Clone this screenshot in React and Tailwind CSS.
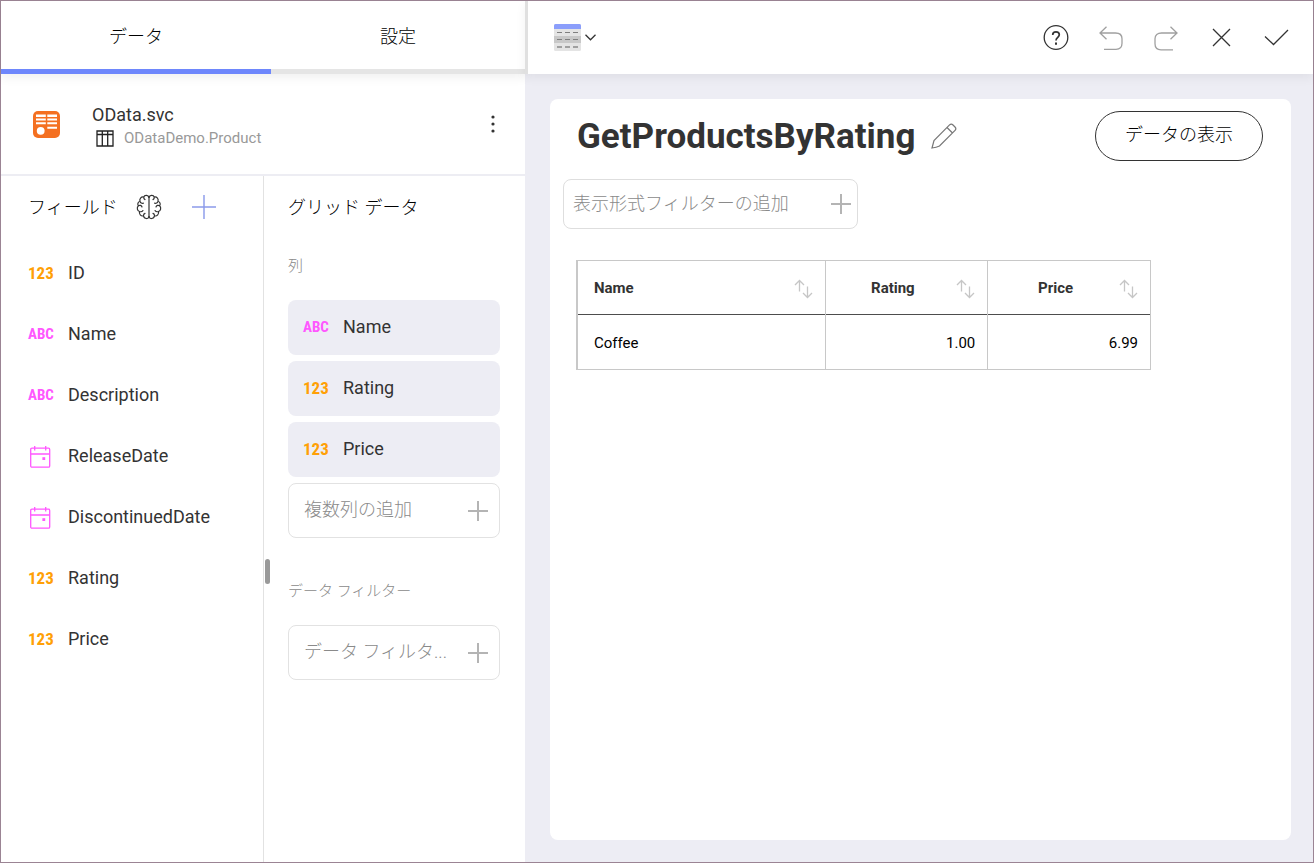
import React from "react";

const fields = [
  { type: "number", name: "ID" },
  { type: "text", name: "Name" },
  { type: "text", name: "Description" },
  { type: "date", name: "ReleaseDate" },
  { type: "date", name: "DiscontinuedDate" },
  { type: "number", name: "Rating" },
  { type: "number", name: "Price" },
];

const columns = [
  { type: "text", name: "Name" },
  { type: "number", name: "Rating" },
  { type: "number", name: "Price" },
];

function CalendarIcon() {
  return (
    <svg className="mt-1 ml-[2px]" width="22" height="23" viewBox="0 0 22 23" fill="none" stroke="#ff57ff" strokeWidth="1.3" aria-hidden="true">
      <rect x="0.7" y="2.2" width="19" height="19" rx="1.2" />
      <path d="M0.7 8h19M4.7 0v4.6M15.7 0v4.6" />
      <rect x="12.4" y="11.2" width="2.8" height="2.8" fill="#ff57ff" stroke="none" />
    </svg>
  );
}

function TypeIcon({ type }) {
  return (
    <span className="flex w-[40px] shrink-0 items-center font-['Roboto_Condensed','Liberation_Sans_Narrow',Roboto,sans-serif] leading-5 font-bold">
      {type === "number" && <span className="text-[17px] text-[#ffa006]">123</span>}
      {type === "text" && <span className="text-[15px] text-[#ff57ff]">ABC</span>}
      {type === "date" && <CalendarIcon />}
    </span>
  );
}

function PlusIcon({ size = 20, color = "#b4b4b4", width = 2 }) {
  return (
    <svg className="shrink-0" width={size} height={size} viewBox="0 0 20 20" fill="none" stroke={color} strokeWidth={width} aria-hidden="true">
      <path d="M10 0v20M0 10h20" />
    </svg>
  );
}

function AddBox({ label }) {
  return (
    <button type="button" className="flex h-[55px] w-full items-center justify-between rounded-lg border border-[#e2e2e2] pr-[11px] pl-[15px] text-left font-light text-[#8a8a8a]">
      <span className="pb-[2px] whitespace-nowrap">{label}</span>
      <PlusIcon />
    </button>
  );
}

function SortIcon() {
  return (
    <svg className="shrink-0" width="19" height="20" viewBox="0 0 19 20" fill="none" stroke="#c6c6c6" strokeWidth="1.3" aria-hidden="true">
      <path d="M5.5 12.5V1.5M1 6l4.500-4.500L10 6M13.500 7.500V18.500M9 14l4.500 4.500L18 14" />
    </svg>
  );
}

function SourceIcon() {
  return (
    <svg width="27" height="27" viewBox="0 0 27 27" aria-hidden="true">
      <rect width="27" height="27" rx="5" fill="#f47021" />
      <g fill="#fff">
        <path d="M3 3.600h9.800v2.300H3zM3 7.600h9.800v2H3zM3 11.300h9.800v2H3zM14.300 3.600H24v2.300h-9.700zM14.300 7.600H24v2h-9.700zM14.300 11.300H24v2h-9.700zM14.300 15.800H24v2h-9.700z" />
        <circle cx="7.700" cy="19.800" r="3.900" />
      </g>
    </svg>
  );
}

function BrainIcon() {
  return (
    <svg width="26" height="26" viewBox="0 0 26 26" fill="none" stroke="#333" strokeWidth="1.200" strokeLinecap="round" strokeLinejoin="round" aria-hidden="true">
      <path d="M13 3.500V22.500" />
      <path d="M13 3.500C12.500 0.800 8.500 0.600 7.800 3C5 2.500 3.200 4.800 4 7.300C1.700 8 1.300 10.300 2.400 11.800C0.500 13.600 1.200 16.800 3.500 17.500C2.800 20.200 4.900 22.400 7.500 21.900C8.200 25.400 12.500 25.200 13 22.500M4 7.300C4.400 8.800 5.900 9.600 7.400 9.200M2.400 11.800C3.700 10.900 5.600 11.300 6 13M7.800 3C7.600 4.300 8.200 5.200 9 5.600M3.500 17.500C5 18 6.200 17.600 6.900 16.600M7.500 21.900C7.400 20.500 8 19.700 9 19.400" />
      <path d="M13 3.500C13.500 0.800 17.500 0.600 18.200 3C21 2.500 22.800 4.800 22 7.300C24.300 8 24.700 10.300 23.600 11.800C25.500 13.600 24.800 16.800 22.500 17.500C23.200 20.200 21.100 22.400 18.500 21.900C17.800 25.400 13.500 25.200 13 22.500M22 7.300C21.600 8.800 20.100 9.600 18.600 9.200M23.600 11.800C22.300 10.900 20.400 11.300 20 13M18.200 3C18.400 4.300 17.800 5.200 17 5.600M22.500 17.500C21 18 19.800 17.600 19.100 16.600M18.500 21.900C18.600 20.500 18 19.700 17 19.400" />
    </svg>
  );
}

function DataPanel() {
  return (
    <aside className="flex w-[524px] shrink-0 flex-col bg-white">
      <div role="tablist" className="flex h-[73px] shrink-0 shadow-[0_4px_10px_rgba(0,0,0,0.06)]">
        <button type="button" role="tab" aria-selected="true" className="w-[270px] border-b-[5px] border-[#6e87fc] pt-[2px] font-light text-black">データ</button>
        <button type="button" role="tab" aria-selected="false" className="flex-1 border-b-[5px] border-[#e5e5e5] pt-[2px] font-light text-black">設定</button>
      </div>

      <div className="flex h-[102px] shrink-0 items-center border-b-2 border-[#ededf3] pr-[26px] pl-8">
        <SourceIcon />
        <div className="ml-8 flex-1 pt-1">
          <div className="leading-6">OData.svc</div>
          <div className="flex items-center gap-[10px] pl-1 text-[15px] leading-[22px] text-[#999]">
            <svg width="18" height="17" viewBox="0 0 18 17" fill="none" stroke="#222" strokeWidth="1.300" aria-hidden="true">
              <path d="M1 1h16v15H1zM1 4.500h16M6.300 1v15M11.700 1v15" />
            </svg>
            ODataDemo.Product
          </div>
        </div>
        <button type="button" aria-label="メニュー" className="p-1">
          <svg width="4" height="20" viewBox="0 0 4 20" fill="#333" aria-hidden="true">
            <circle cx="2" cy="3" r="1.600" /><circle cx="2" cy="10" r="1.600" /><circle cx="2" cy="17" r="1.600" />
          </svg>
        </button>
      </div>

      <div className="relative flex flex-1">
        <section className="w-[263px] border-r border-[#e2e2e2] pl-[27px]">
          <div className="flex h-[62px] items-center">
            <h2 className="mr-[18px] font-light text-black">フィールド</h2>
            <button type="button" aria-label="AI"><BrainIcon /></button>
            <button type="button" aria-label="フィールドの追加" className="ml-[30px]"><PlusIcon size={24} color="#8c9bea" width={1.2} /></button>
          </div>
          <ul className="pt-1">
            {fields.map((field) => (
              <li key={field.name} className="flex h-[61px] items-center">
                <TypeIcon type={field.type} />
                {field.name}
              </li>
            ))}
          </ul>
        </section>
        <span className="absolute top-[383px] left-[264px] h-[25px] w-[5px] rounded-sm bg-[#999]" />
        <section className="min-w-0 flex-1 pr-[25px] pl-6">
          <h2 className="flex h-[62px] items-center font-light text-black">グリッド データ</h2>
          <h3 className="flex h-[62px] items-center pb-[6px] text-[15px] font-light text-[#8a8a8a]">列</h3>
          <div className="flex flex-col gap-[6px]">
            {columns.map((column) => (
              <div key={column.name} className="flex h-[55px] items-center rounded-lg bg-[#ededf4] pb-[2px] pl-[15px]">
                <TypeIcon type={column.type} />
                {column.name}
              </div>
            ))}
            <AddBox label="複数列の追加" />
          </div>
          <h3 className="flex h-[87px] items-center pt-5 text-[15px] font-light text-[#8a8a8a]">データ フィルター</h3>
          <AddBox label="データ フィルタ..." />
        </section>
      </div>
    </aside>
  );
}

function Toolbar() {
  return (
    <header className="flex h-[73px] shrink-0 items-center justify-between border-l-[3px] border-[#e0e0e0] bg-white pr-6 pl-[26px] shadow-[0_4px_10px_rgba(0,0,0,0.06)]">
      <button type="button" aria-label="表示形式" className="flex items-center gap-1">
        <svg width="27" height="27" viewBox="0 0 27 27" aria-hidden="true">
          <rect width="27" height="27" rx="1.500" fill="#e4e4e4" />
          <path d="M0 5V1.500Q0 0 1.500 0h24Q27 0 27 1.500V5z" fill="#8b9efb" />
          <path d="M0 12h27v7H0z" fill="#c8c8c8" />
          <path d="M3 8.500h21M3 15.500h21" stroke="#7f7f7f" strokeDasharray="5 3" />
          <path d="M3 23h21" stroke="#a0a0a0" strokeWidth="2" strokeDasharray="5 3" />
        </svg>
        <svg width="11" height="7" viewBox="0 0 11 7" fill="none" stroke="#333" strokeWidth="1.300" aria-hidden="true"><path d="M0.500 0.800l5 5 5-5" /></svg>
      </button>
      <div className="flex items-center gap-[29px]">
        <button type="button" aria-label="ヘルプ">
          <svg width="26" height="26" viewBox="0 0 26 26" fill="none" stroke="#333" strokeWidth="1.300" aria-hidden="true">
            <circle cx="13" cy="12.500" r="11.800" />
            <path d="M9.700 10C9.700 8 11 6.800 13 6.800C15 6.800 16.300 8 16.300 9.800C16.300 12.300 13 12.400 13 15.500" strokeWidth="1.700" />
            <path d="M12 17.500h2v2.200h-2z" fill="#333" stroke="none" />
          </svg>
        </button>
        <button type="button" aria-label="元に戻す">
          <svg width="26" height="26" viewBox="0 0 26 26" fill="none" stroke="#a0a0a0" strokeWidth="1.300" aria-hidden="true"><path d="M8.500 1.800L2 8l6.500 6.200M2 8h15.500C21.500 8 24 10.300 24 13.800v4.500C24 22.200 21.800 24.300 18 24.300H6" /></svg>
        </button>
        <button type="button" aria-label="やり直し">
          <svg width="26" height="26" viewBox="0 0 26 26" fill="none" stroke="#a0a0a0" strokeWidth="1.300" aria-hidden="true"><path d="M17.500 1.800L24 8l-6.500 6.200M24 8H8.500C4.500 8 2 10.300 2 13.800v5C2 22.700 4.200 24.800 8 24.800H20" /></svg>
        </button>
        <button type="button" aria-label="閉じる">
          <svg width="26" height="26" viewBox="0 0 26 26" fill="none" stroke="#333" strokeWidth="1.300" aria-hidden="true"><path d="M5 4l17 17M22 4l-17 17" /></svg>
        </button>
        <button type="button" aria-label="確定">
          <svg width="26" height="26" viewBox="0 0 26 26" fill="none" stroke="#333" strokeWidth="1.300" aria-hidden="true"><path d="M2 11.500l8.500 8L25 5" /></svg>
        </button>
      </div>
    </header>
  );
}

function DataTable() {
  return (
    <table className="mt-[31px] ml-[13px] w-[575px] table-fixed border-collapse border border-l-2 border-[#c8c8c8] text-[15px]">
      <thead>
        <tr className="h-[54px] border-b border-[#4d4d4d]">
          <th scope="col" className="w-[248px] border-r border-r-[#c8c8c8] pt-[2px] pr-3 pl-4 text-left">
            <div className="flex items-center justify-between">Name<SortIcon /></div>
          </th>
          {["Rating", "Price"].map((name) => (
            <th key={name} scope="col" className="border-r border-r-[#c8c8c8] px-3 pt-[2px]">
              <div className="flex items-center"><span className="flex-1 pr-2">{name}</span><SortIcon /></div>
            </th>
          ))}
        </tr>
      </thead>
      <tbody className="text-black">
        <tr className="h-[55px]">
          <td className="border-r border-[#c8c8c8] pt-[2px] pl-4">Coffee</td>
          <td className="border-r border-[#c8c8c8] pt-[2px] pr-3 text-right">1.00</td>
          <td className="pt-[2px] pr-3 text-right">6.99</td>
        </tr>
      </tbody>
    </table>
  );
}

export default function App() {
  return (
    <div className="flex min-h-screen border border-[#9b8494] bg-[#ededf4] font-[Roboto,'Noto_Sans_CJK_JP',sans-serif] text-[18px] text-[#333]">
      <DataPanel />
      <div className="flex min-w-0 flex-1 flex-col">
        <Toolbar />
        <main className="mt-[25px] mr-[22px] mb-[22px] ml-[25px] flex-1 rounded-lg bg-white pl-[13px]">
          <div className="flex h-[74px] items-center pr-7 pl-[14px]">
            <h1 className="pt-[2px] text-[35px] font-bold">GetProductsByRating</h1>
            <button type="button" aria-label="タイトルの編集" className="ml-4">
              <svg width="26" height="26" viewBox="0 0 26 26" fill="none" stroke="#777" strokeWidth="1.200" aria-hidden="true">
                <path d="M1 25L3 17.500L18.300 2.200C19.400 1.100 21 1 22 2L24 4C25 5 24.900 6.600 23.800 7.700L8.500 23Q5.500 24.500 1 25ZM16 4.500l5.500 5.500" />
              </svg>
            </button>
            <button type="button" className="ml-auto h-[50px] w-[168px] rounded-full border border-[#333] pb-1 font-light text-black">データの表示</button>
          </div>
          <button type="button" className="mt-[6px] flex h-[50px] w-[295px] items-center justify-between rounded-lg border border-[#dedede] pr-[6px] pl-[9px] font-light text-[#8a8a8a]">
            <span className="pb-[2px]">表示形式フィルターの追加</span>
            <PlusIcon />
          </button>
          <DataTable />
        </main>
      </div>
    </div>
  );
}
